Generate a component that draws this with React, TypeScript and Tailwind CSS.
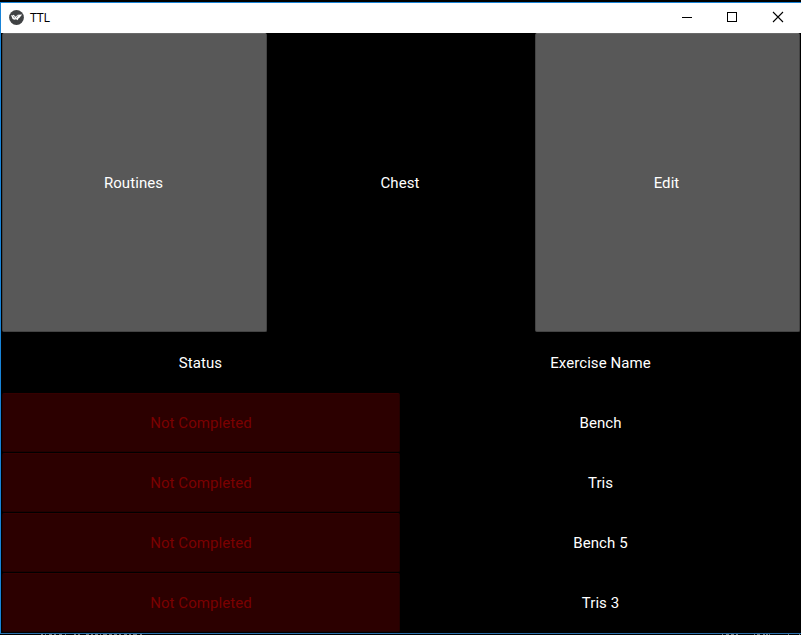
const exercises = ["Bench", "Tris", "Bench 5", "Tris 3"];

// Slivers of the window behind, visible along the last row of pixels.
const slivers = [
  [41, 2], [45, 1], [49, 3], [54, 2], [59, 3], [65, 1], [74, 2], [78, 2],
  [86, 3], [91, 2], [95, 3], [100, 1], [103, 4], [109, 3], [114, 3], [119, 2],
  [124, 3], [129, 2], [133, 4], [140, 2],
  [722, 1], [726, 3], [731, 3], [736, 2], [754, 1], [757, 3], [763, 2],
  [766, 2], [769, 1], [788, 1], [799, 1],
];

function BigButton({ label }: { label: string }) {
  return (
    <div className="flex h-[299px] w-[265px] items-center justify-center rounded-[2px] border border-[#444444] border-t-[#6a6a6a] bg-[#585858] pr-[2px]">
      <span>{label}</span>
    </div>
  );
}

function TitleBar() {
  return (
    <header className="flex h-[30px] items-center justify-between bg-white pl-2 text-black">
      <div className="flex items-center gap-[6px]">
        <svg className="mb-[2px]" width="15" height="15" viewBox="0 0 15 15">
          <circle cx="7.5" cy="7.5" r="7.4" fill="#404244" />
          <path
            d="M2 5L3.5 5.6L4.7 4.8L6.5 6.8L8.7 4.8L13.2 4.6L11.7 6.3L10.8 7.6L9.5 8.6L8.6 10.2L7.1 9.2L5.4 9.8L3.6 8.9Z"
            fill="#fff"
          />
          <path d="M4.6 6L5.5 8.2M9 5.4L7.1 8.2" stroke="#404244" strokeWidth="0.6" />
        </svg>
        <span className="font-['Open_Sans','Noto_Sans',sans-serif] text-[12.5px] leading-4 tracking-[-0.1px]">TTL</span>
      </div>
      <svg width="130" height="30" viewBox="0 0 130 30" fill="none" stroke="#000" shapeRendering="crispEdges">
        <path d="M11 14.5H21" />
        <rect x="56.5" y="9.5" width="9" height="9" />
        <path d="M102 9L112 19M112 9L102 19" shapeRendering="auto" strokeWidth="1.1" />
      </svg>
    </header>
  );
}

export default function App() {
  return (
    <div className="flex h-[635px] w-[801px] flex-col overflow-hidden bg-black pt-[2px] font-['Roboto',sans-serif] text-[15px] leading-[18px] tracking-[0.07px] text-white">
      <div className="flex h-[632px] flex-col border-y border-l border-y-[#1883d7] border-l-[#1883d7] border-b-[#2b70ad]">
        <TitleBar />
        <main className="h-[600px] bg-black">
          <section className="flex h-[300px] justify-between px-px">
            <BigButton label="Routines" />
            <div className="flex h-[299px] items-center justify-center pr-[2px]">Chest</div>
            <BigButton label="Edit" />
          </section>
          <div className="grid h-[60px] grid-cols-2 items-center text-center">
            <span className="pr-px">Status</span>
            <span className="pr-px">Exercise Name</span>
          </div>
          {exercises.map((name) => (
            <div key={name} className="grid h-[60px] grid-cols-2">
              <div className="mx-px mb-px flex h-[59px] items-center justify-center rounded-[2px] border border-[#220000] border-t-[#350000] bg-[#2c0000] text-[#7b0000]">
                <span>Not Completed</span>
              </div>
              <div className="flex items-center justify-center pr-px">{name}</div>
            </div>
          ))}
        </main>
      </div>
      <svg className="block shrink-0" width="801" height="1" viewBox="0 0 801 1" shapeRendering="crispEdges">
        {slivers.map(([x, w]) => (
          <rect key={x} x={x} y="0" width={w} height="1" fill="#777" />
        ))}
      </svg>
    </div>
  );
}
